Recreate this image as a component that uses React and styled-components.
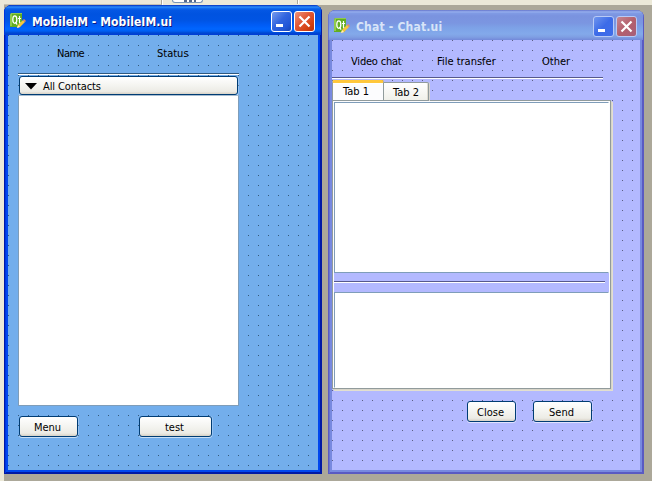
import React from "react";
import styled, { createGlobalStyle } from "styled-components";

const Global = createGlobalStyle`
  * { box-sizing: border-box; }
  body { margin: 0; background: #aca899; overflow: hidden; }
`;

const Desktop = styled.div`
  width: 652px;
  height: 481px;
  background: #aca899;
  border-left: 4px solid #ece9d8;
  font: 11px "DejaVu Sans Condensed", "DejaVu Sans", sans-serif;
  color: #000;
  overflow: hidden;
`;

const DockStrip = styled.div`
  display: flex;
  height: 5px;
  margin-left: -4px;
  background: #ece9d8;
`;

const DockCell = styled.div`
  width: ${(p) => p.$w}px;
  height: ${(p) => p.$h}px;
  border-right: 1px solid #aca899;
  border-bottom: ${(p) => (p.$line ? "1px solid #c5c1b2" : "none")};
  box-shadow: 1px 0 #fff;
`;

const DockButton = styled.div`
  width: 31px;
  height: 3px;
  margin-left: 10px;
  margin-right: -41px;
  border: 1px solid #7c96b5;
  border-top: 0;
  border-radius: 0 0 3px 3px;
  background: linear-gradient(90deg, #fff 11px, #55698a 11px 14px, #fff 14px 16px, #55698a 16px 19px, #fff 19px 21px, #55698a 21px 23px, #fff 23px);
`;

const Windows = styled.div`
  display: flex;
  gap: 6px;
  align-items: flex-start;
`;

const themes = {
  active: {
    frame: "#0019a5",
    bar: "linear-gradient(#0831c0 0, #1058d8 1px, #3191fd 2px, #1470f0 3px, #0457e4 5px, #0053e0 9px, #0054e3 15px, #005cf5 20px, #0066ff 24px, #005ff2 26px, #0046d0 28px, #003dd7 30px)",
    edge: "#0034dd",
    inner: "#0047ee",
    canvas: "#73aeec",
    dot: "#36597a",
    title: "#fff",
    shadow: "1px 1px #0a1883",
  },
  inactive: {
    frame: "#5a5ac2",
    bar: "linear-gradient(#6675c9 0, #7f94e0 1px, #98b1ee 2px, #809be5 3px, #7a93df 6px, #7b96e1 13px, #7da2e7 18px, #83a9ea 24px, #7f9fe3 27px, #7388d9 30px)",
    edge: "#6675d0",
    inner: "#7889df",
    canvas: "#b3b9ff",
    dot: "#5c5f83",
    title: "#d8e4f8",
    shadow: "none",
  },
};

const Window = styled.section`
  width: ${(p) => p.$w}px;
  height: ${(p) => p.$h}px;
  margin-top: ${(p) => p.$top || 0}px;
  display: flex;
  flex-direction: column;
  border-radius: 8px 8px 0 0;
  overflow: hidden;
  background: ${(p) => p.$t.inner};
  box-shadow: inset 1px 0 ${(p) => p.$t.frame}, inset -1px -1px ${(p) => p.$t.frame}, inset 2px 0 ${(p) => p.$t.edge}, inset -2px -2px ${(p) => p.$t.frame};
`;

const TitleBar = styled.header`
  height: 30px;
  flex: none;
  display: flex;
  align-items: center;
  padding: 3px 7px 0 6px;
  background: ${(p) => p.$t.bar};
  box-shadow: inset 1px 0 ${(p) => p.$t.edge}, inset -1px 0 ${(p) => p.$t.frame};
`;

const Title = styled.h1`
  flex: 1;
  margin: 0 0 0 5px;
  font: bold 12px/20px "DejaVu Sans Condensed", "DejaVu Sans", sans-serif;
  color: ${(p) => p.$t.title};
  text-shadow: ${(p) => p.$t.shadow};
  white-space: nowrap;
`;

const TitleText = styled.span`
  letter-spacing: ${(p) => p.$ls}px;
`;

const CaptionButton = styled.button`
  width: 21px;
  height: 21px;
  margin-left: 2px;
  padding: 0;
  display: block;
  border: 1px solid ${(p) => (p.$dim ? "#b8caf6" : "#fff")};
  border-radius: 3px;
  background: ${(p) =>
    p.$close
      ? p.$dim
        ? "linear-gradient(135deg, #c58792, #b4606d 50%, #a65f79)"
        : "linear-gradient(135deg, #ec947c, #e25b3a 40%, #d34112 75%, #b8310d)"
      : p.$dim
        ? "linear-gradient(135deg, #6f95ee, #3c6be8 50%, #406de9)"
        : "linear-gradient(135deg, #779cee, #3265df 45%, #2357d8 75%, #1745b5)"};
`;

const Canvas = styled.div`
  flex: 1;
  margin: 0 4px 4px;
  background: conic-gradient(from 270deg at 1px 1px, ${(p) => p.$t.dot} 90deg, transparent 0) 0 0 / 10px 10px, ${(p) => p.$t.canvas};
`;

const MenuRow = styled.nav`
  display: flex;
  height: ${(p) => p.$h}px;
  padding-top: ${(p) => p.$top}px;
  line-height: 14px;
`;

const Label = styled.span`
  width: ${(p) => p.$w}px;
  margin-left: ${(p) => p.$gap}px;
  letter-spacing: ${(p) => p.$ls || 0}px;
  white-space: nowrap;
`;

const Divider = styled.div`
  width: ${(p) => p.$w}px;
  height: 2px;
  margin-left: ${(p) => p.$left || 0}px;
  border-top: 1px solid ${(p) => p.$color};
  background: #fff;
`;

const PushButton = styled.button`
  width: ${(p) => p.$w}px;
  height: ${(p) => p.$h || 21}px;
  margin: 0;
  padding: 1px 2px 0 0;
  font: inherit;
  letter-spacing: ${(p) => p.$ls || 0}px;
  color: #000;
  border: 1px solid #003c74;
  border-radius: 3px;
  background: linear-gradient(#fff, #f4f4f0 50%, #ecebe5 85%, #d8d2c6);
  box-shadow: 0 1px rgba(255, 255, 255, 0.6), 1px 0 rgba(255, 255, 255, 0.25);
`;

const ContactsHeader = styled(PushButton)`
  display: flex;
  align-items: center;
  gap: 6px;
  margin: 1px 0 0 11px;
  padding: 1px 0 0 5px;
`;

const ContactList = styled.div`
  width: 221px;
  height: 311px;
  margin-left: 10px;
  background: #fff;
  border: 1px solid #7f9db9;
  border-top-color: #a8bdd0;
`;

const ButtonRow = styled.div`
  display: flex;
  gap: ${(p) => p.$gap}px;
  padding: ${(p) => p.$top}px 0 0 ${(p) => p.$left}px;
`;

const Tabs = styled.div`
  display: flex;
  align-items: flex-start;
  height: 20px;
  margin-top: 1px;
`;

const ActiveTab = styled.div`
  width: 52px;
  height: 20px;
  padding: 2px 0 0 10px;
  line-height: 14px;
  border: 1px solid #919b9c;
  border-top: 3px solid #ffc73c;
  border-bottom: 0;
  border-radius: 2px 2px 0 0;
  background: #fcfcfe;
  box-shadow: inset 0 1px #fff;
`;

const InactiveTab = styled.div`
  width: 45px;
  height: 19px;
  margin-top: 2px;
  padding: 3px 0 0 9px;
  line-height: 14px;
  border: 1px solid #919b9c;
  border-left: 0;
  border-radius: 0 2px 0 0;
  background: linear-gradient(#fff, #f0f0ea);
  box-shadow: 1px 0 #d8d5d0, inset -1px 0 #dedbd0;
`;

const Pane = styled.div`
  width: 279px;
  height: 289px;
  padding: 1px 0 0 1px;
  border: 1px solid #919b9c;
  background: linear-gradient(#fcfcfe, #fcfcfe) padding-box, #919b9c;
  box-shadow: 1px 1px #d8d5c9, 2px 2px #e2dfd0;
`;

const Splitter = styled.div`
  width: 275px;
  background: #b3b9ff;
`;

const TextView = styled.div`
  height: ${(p) => p.$h}px;
  background: #fff;
  border: 1px solid #7f9db9;
  border-right-color: #fff;
  border-bottom-color: ${(p) => (p.$last ? "#fff" : "#7f9db9")};
`;

const Handle = styled.div`
  height: 19px;
  padding-top: 8px;
`;

const IconBox = styled.svg`
  flex: none;
  margin-bottom: 1px;
`;

const QtIcon = () => (
  <IconBox width="17" height="18" viewBox="0 0 17 18">
    <path d="M1 1H12V12L10 15H0V3Z" fill="#62ad20" />
    <path d="M0 3L1 1H12V2H2V14H0Z" fill="#8fcb4b" />
    <ellipse cx="4.8" cy="7.6" rx="2" ry="3.7" fill="none" stroke="#fff" strokeWidth="1.3" />
    <path d="M5.5 10L7.1 12.6M9.5 4V10.4Q9.6 11.5 10.9 11M8 6.5H11.1" fill="none" stroke="#fff" strokeWidth="1.2" />
    <path d="M7 16L8 13L13 8L15 10L10 15Z" fill="#f6c63d" />
    <path d="M13 8L14 7L16 9L15 10Z" fill="#e98b62" />
    <path d="M7 16L8 13L10 15Z" fill="#fff0bd" />
  </IconBox>
);

const MinimizeGlyph = () => (
  <svg width="19" height="19" viewBox="0 0 19 19" display="block">
    <path d="M4 12H11V15H4Z" fill="#fff" />
  </svg>
);

const CloseGlyph = () => (
  <svg width="19" height="19" viewBox="0 0 19 19" display="block">
    <path d="M4.5 4.5L14.5 14.5M14.5 4.5L4.5 14.5" stroke="#fff" strokeWidth="2.2" />
  </svg>
);

const Arrow = () => (
  <svg width="12" height="7" viewBox="0 0 12 7">
    <path d="M0 0H12L6 6.5Z" fill="#000" />
  </svg>
);

function Frame({ t, title, ls, dim, children, ...size }) {
  return (
    <Window $t={t} {...size}>
      <TitleBar $t={t}>
        <QtIcon />
        <Title $t={t}>
          <TitleText $ls={ls}>{title}</TitleText>
        </Title>
        <CaptionButton $dim={dim} aria-label="Minimize">
          <MinimizeGlyph />
        </CaptionButton>
        <CaptionButton $dim={dim} $close aria-label="Close window">
          <CloseGlyph />
        </CaptionButton>
      </TitleBar>
      <Canvas $t={t}>{children}</Canvas>
    </Window>
  );
}

export default function App() {
  return (
    <Desktop>
      <Global />
      <DockStrip>
        <DockCell $w={162} $h={5} $line />
        <DockButton />
        <DockCell $w={136} $h={4} />
      </DockStrip>
      <Windows>
        <Frame t={themes.active} title="MobileIM - MobileIM.ui" ls={0.08} $w={318} $h={469}>
          <MenuRow $h={38} $top={12}>
            <Label $gap={49} $w={51} $ls={-0.5}>Name</Label>
            <Label $gap={49} $w={50}>Status</Label>
          </MenuRow>
          <Divider $w={221} $left={10} $color="#2f587f" />
          <ContactsHeader $w={219} $h={19} $ls={-0.1}>
            <Arrow />
            All Contacts
          </ContactsHeader>
          <ContactList />
          <ButtonRow $top={10} $left={11} $gap={61}>
            <PushButton $w={59}>Menu</PushButton>
            <PushButton $w={73}>test</PushButton>
          </ButtonRow>
        </Frame>
        <Frame t={themes.inactive} title="Chat - Chat.ui" ls={0.2} dim $w={316} $h={464} $top={5}>
          <MenuRow $h={37} $top={15}>
            <Label $gap={19} $w={67} $ls={-0.2}>Video chat</Label>
            <Label $gap={19} $w={86}>File transfer</Label>
            <Label $gap={19} $w={40}>Other</Label>
          </MenuRow>
          <Divider $w={271} $color="#56598c" />
          <Tabs>
            <ActiveTab>Tab 1</ActiveTab>
            <InactiveTab>Tab 2</InactiveTab>
          </Tabs>
          <Pane>
            <Splitter>
              <TextView $h={171} />
              <Handle>
                <Divider $w={271} $color="#56598c" />
              </Handle>
              <TextView $h={96} $last />
            </Splitter>
          </Pane>
          <ButtonRow $top={12} $left={135} $gap={17}>
            <PushButton $w={49}>Close</PushButton>
            <PushButton $w={59}>Send</PushButton>
          </ButtonRow>
        </Frame>
      </Windows>
    </Desktop>
  );
}
